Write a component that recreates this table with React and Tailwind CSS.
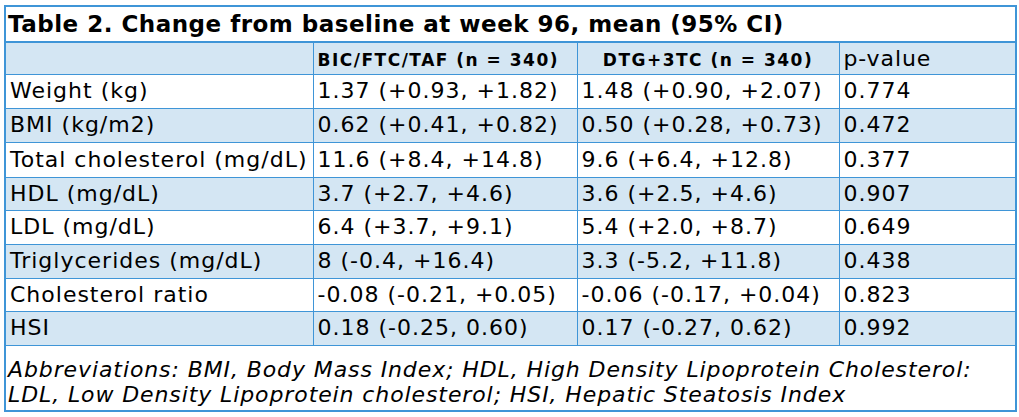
export default function App() {
  const rows = [
    ["Weight (kg)", "1.37 (+0.93, +1.82)", "1.48 (+0.90, +2.07)", "0.774"],
    ["BMI (kg/m2)", "0.62 (+0.41, +0.82)", "0.50 (+0.28, +0.73)", "0.472"],
    ["Total cholesterol (mg/dL)", "11.6 (+8.4, +14.8)", "9.6 (+6.4, +12.8)", "0.377"],
    ["HDL (mg/dL)", "3.7 (+2.7, +4.6)", "3.6 (+2.5, +4.6)", "0.907"],
    ["LDL (mg/dL)", "6.4 (+3.7, +9.1)", "5.4 (+2.0, +8.7)", "0.649"],
    ["Triglycerides (mg/dL)", "8 (-0.4, +16.4)", "3.3 (-5.2, +11.8)", "0.438"],
    ["Cholesterol ratio", "-0.08 (-0.21, +0.05)", "-0.06 (-0.17, +0.04)", "0.823"],
    ["HSI", "0.18 (-0.25, 0.60)", "0.17 (-0.27, 0.62)", "0.992"],
  ];
  const heights = ["h-[34px]", "h-[34px]", "h-[35px]", "h-[33px]", "h-[34px]", "h-[34px]", "h-[33px]", "h-[34px]"];

  return (
    <div className="bg-white w-[1019px] h-[417px] pt-[5px] pl-[4px] font-['Verdana','DejaVu_Sans',sans-serif] text-black">
      <table className="border-collapse w-[1011px] table-fixed border-2 border-[#3f95d7]">
        <colgroup>
          <col className="w-[308px]" />
          <col className="w-[264px]" />
          <col className="w-[262px]" />
          <col className="w-[177px]" />
        </colgroup>
        <tbody>
          <tr className="h-[36px] border-b-2 border-[#3f95d7]">
            <td colSpan={4} className="px-[2px] text-[23px] tracking-[0.5px] font-bold leading-none align-middle whitespace-nowrap">
              Table 2. Change from baseline at week 96, mean (95% CI)
            </td>
          </tr>
          <tr className="h-[31px] bg-[#d4e6f3] border-b border-[#3f95d7]">
            <td className="border-r border-[#3f95d7]"></td>
            <td className="border-r border-[#3f95d7] px-[4px] text-[17px] tracking-[1.5px] font-bold align-baseline pt-[5px] whitespace-nowrap">
              BIC/FTC/TAF (n = 340)
            </td>
            <td className="border-r border-[#3f95d7] px-[4px] text-[17px] tracking-[1.5px] font-bold align-baseline pt-[5px] text-center whitespace-nowrap">
              DTG+3TC (n = 340)
            </td>
            <td className="px-[4px] text-[22px] tracking-[0.9px] align-baseline pt-[5px] leading-none">p-value</td>
          </tr>
          {rows.map((r, i) => (
            <tr key={i} className={`${heights[i]} border-b border-[#3f95d7] ${i % 2 === 1 ? "bg-[#d4e6f3]" : "bg-white"}`}>
              {r.map((c, j) => (
                <td
                  key={j}
                  className={`px-[4px] text-[22px] tracking-[1px] leading-none align-middle whitespace-nowrap ${j < 3 ? "border-r border-[#3f95d7]" : ""}`}
                >
                  {c}
                </td>
              ))}
            </tr>
          ))}
          <tr className="h-[66px]">
            <td colSpan={4} className="px-[2px] pt-[8px] text-[22px] tracking-[0.9px] italic leading-[25px] align-middle whitespace-nowrap">
              Abbreviations: BMI, Body Mass Index; HDL, High Density Lipoprotein Cholesterol:
              <br />
              LDL, Low Density Lipoprotein cholesterol; HSI, Hepatic Steatosis Index
            </td>
          </tr>
        </tbody>
      </table>
    </div>
  );
}
